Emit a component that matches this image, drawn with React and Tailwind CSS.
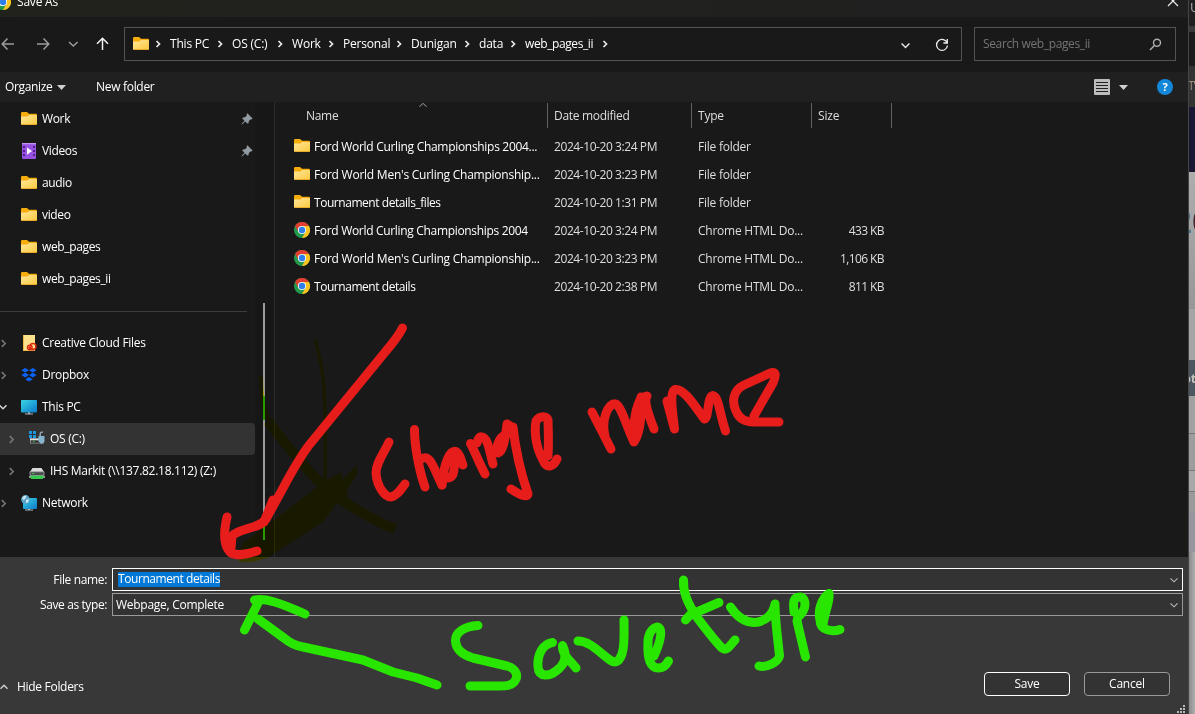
import React from "react";

function Folder() {
  return (
    <svg width="16" height="14" viewBox="0 0 16 14" className="shrink-0">
      <defs>
        <linearGradient id="fold" x1="0" y1="0" x2="1" y2="1">
          <stop offset="0" stopColor="#ffe69c" />
          <stop offset="1" stopColor="#fcc93c" />
        </linearGradient>
      </defs>
      <path d="M0 1.2Q0 0 1.2 0H6L8 1.8H15Q16 1.8 16 3V8H0Z" fill="#f5ac0c" />
      <path d="M0 4.5H6.5L8 3H15.4Q16 3 16 3.6V12Q16 13 15 13H1Q0 13 0 12Z" fill="url(#fold)" />
      <path d="M.2 12.2H15.8Q15.6 13 15 13H1Q.4 13 .2 12.2Z" fill="#e2a01d" />
    </svg>
  );
}

function Chrome() {
  return (
    <svg width="16" height="16" viewBox="0 0 16 16" className="shrink-0">
      <circle cx="8" cy="8" r="8" fill="#24984b" />
      <path d="M1.07 4A8 8 0 0 1 14.93 4H8A4 4 0 0 0 4.54 10Z" fill="#e33b2e" />
      <path d="M14.93 4A8 8 0 0 1 8 16L11.46 10A4 4 0 0 0 8 4Z" fill="#fcc31e" />
      <circle cx="8" cy="8" r="4.1" fill="#fff" />
      <circle cx="8" cy="8" r="3.2" fill="#2f7de9" />
    </svg>
  );
}

function Chev({ d = "right", c = "#e8e8e8", s = 8, w = 1.5 }) {
  const paths = { right: "M2.5 1L5.5 4L2.5 7", down: "M.5 2.3L4 5.8L7.5 2.3", up: "M.5 5.8L4 2.3L7.5 5.8" };
  return (
    <svg width={s} height={s} viewBox="0 0 8 8" className="shrink-0 overflow-visible" fill="none" stroke={c} strokeWidth={w}>
      <path d={paths[d]} />
    </svg>
  );
}

function Pin() {
  return (
    <svg width="12" height="12" viewBox="0 0 12 12" className="shrink-0" fill="#929ba1">
      <path d="M6.3.3L11.6 5.5L10.6 6.4L9.7 6.2L7.7 8.2L7.6 10.1L6.8 10.8L4.2 8.4L1 11.5L.4 11L3.5 7.7L1.2 5.2L2 4.4L4 4.3L6 2.2L5.6 1Z" />
    </svg>
  );
}

function Video() {
  return (
    <svg width="16" height="16" viewBox="0 0 16 16" className="shrink-0">
      <rect x="1" width="14" height="16" rx="1" fill="#9752e4" />
      <rect x="1" width="14" height="1.2" fill="#c294f5" />
      <path d="M2 3h2v2H2zM2 7h2v2H2zM2 11h2v2H2zM12 3h2v2h-2zM12 7h2v2h-2zM12 11h2v2h-2z" fill="#4d2384" />
      <path d="M6 4.5V11.7L11 8Z" fill="#fff" />
    </svg>
  );
}

function CreativeCloud() {
  return (
    <svg width="16" height="16" viewBox="0 0 16 16" className="shrink-0">
      <path d="M2 0H14V16H2Z" fill="#ffe18a" />
      <path d="M2 0H3V16H2ZM2 15H14V16H2Z" fill="#efbd43" />
      <g fill="none" stroke="#dc2712" strokeWidth="1.4">
        <circle cx="8.8" cy="12.4" r="2.3" />
        <circle cx="12" cy="11.5" r="3" />
        <path d="M7.5 12L10 14.5H13" />
      </g>
    </svg>
  );
}

function Dropbox() {
  return (
    <svg width="16" height="16" viewBox="0 0 16 16" className="shrink-0" fill="#0b62f6">
      <path d="M4.2 1L8 3.3L4.2 5.6L.4 3.3ZM11.8 1L15.6 3.3L11.8 5.6L8 3.3ZM4.2 5.8L8 8.1L4.2 10.4L.4 8.1ZM11.8 5.8L15.6 8.1L11.8 10.4L8 8.1ZM8 10L11.8 12.2L8 14.5L4.2 12.2Z" />
    </svg>
  );
}

function Monitor({ globe }) {
  return (
    <svg width="16" height="16" viewBox="0 0 16 16" className="shrink-0">
      <defs>
        <linearGradient id="mon" x1="0" y1="0" x2="1" y2="1">
          <stop offset="0" stopColor="#3bd5e4" />
          <stop offset="1" stopColor="#0c78c9" />
        </linearGradient>
      </defs>
      <path d="M7 13h2v1.5h3v1H4v-1h3Z" fill="#aeb6bc" />
      <rect x={globe ? 2 : 0} y={globe ? 3 : 1} width={globe ? 14 : 16} height={globe ? 11 : 12.5} rx=".8" fill="url(#mon)" />
      {globe && (
        <g>
          <circle cx="4.5" cy="4.5" r="4.4" fill="#5ba4c9" />
          <path d="M1 3Q3 0 5.5.8L4.5 3.5L2.5 5ZM5 5L8 4L7 7.5L5 8Z" fill="#cfe7f0" />
        </g>
      )}
    </svg>
  );
}

function OsDrive() {
  return (
    <svg width="16" height="16" viewBox="0 0 16 16" className="shrink-0">
      <path d="M1 7.5H15V12.5H1Z" fill="#8b9092" />
      <path d="M1 7.5H15V9H1Z" fill="#dcdddd" />
      <path d="M2 9.6H11V11.7H2Z" fill="#292b2c" />
      <path d="M4 10.2h1.5v1H4z" fill="#4be04c" />
      <path d="M0 0h3v3H0zM4 0h3v3H4zM0 4h3v3H0zM4 4h3v3H4z" fill="#1b95e0" />
      <path d="M11.2 6V2.8Q11.5.7 14 1.2" fill="none" stroke="#9aabb5" strokeWidth="1.4" />
      <path d="M9.5 5H15.5V10.2L12.5 13.2L9.5 10.2Z" fill="#86b5d1" />
    </svg>
  );
}

function NetDrive() {
  return (
    <svg width="16" height="16" viewBox="0 0 16 16" className="shrink-0">
      <path d="M3.5 5H12.5L15 9H1Z" fill="#dadada" />
      <path d="M1 8.7H15V12.5H1Z" fill="#4b4e50" stroke="#a8abad" strokeWidth=".8" />
      <path d="M3.5 10h1.5v1H3.5z" fill="#4be04c" />
      <path d="M0 13.3H16V14.7H0Z" fill="#a9e4b3" />
      <path d="M2 12.6H14V16H2Z" fill="#35c94e" />
    </svg>
  );
}

const places = [
  { icon: <Folder />, name: "Work", pin: true },
  { icon: <Video />, name: "Videos", pin: true },
  { icon: <Folder />, name: "audio" },
  { icon: <Folder />, name: "video" },
  { icon: <Folder />, name: "web_pages" },
  { icon: <Folder />, name: "web_pages_ii" },
];

const tree = [
  { icon: <CreativeCloud />, name: "Creative Cloud Files" },
  { icon: <Dropbox />, name: "Dropbox" },
  { icon: <Monitor />, name: "This PC", open: true },
  { icon: <OsDrive />, name: "OS (C:)", child: true, active: true },
  { icon: <NetDrive />, name: "IHS Markit (\\\\137.82.18.112) (Z:)", child: true },
  { icon: <Monitor globe />, name: "Network" },
];

const crumbs = [
  ["This PC", "w-[62px]"],
  ["OS (C:)", "w-[60px]"],
  ["Work", "w-[51px]"],
  ["Personal", "w-[68px]"],
  ["Dunigan", "w-[68px]"],
  ["data", "w-[46px]"],
  ["web_pages_ii", "w-[92px] tracking-[-0.4px]"],
];

const files = [
  ["Ford World Curling Championships 2004...", "2024-10-20 3:24 PM", "File folder", "", "tracking-[-0.3px]"],
  ["Ford World Men's Curling Championship...", "2024-10-20 3:23 PM", "File folder", "", "tracking-[-0.24px]"],
  ["Tournament details_files", "2024-10-20 1:31 PM", "File folder", "", "tracking-[-0.45px]"],
  ["Ford World Curling Championships 2004", "2024-10-20 3:24 PM", "Chrome HTML Do...", "433 KB", "tracking-[-0.32px]"],
  ["Ford World Men's Curling Championship...", "2024-10-20 3:23 PM", "Chrome HTML Do...", "1,106 KB", "tracking-[-0.24px]"],
  ["Tournament details", "2024-10-20 2:38 PM", "Chrome HTML Do...", "811 KB", "tracking-[-0.45px]"],
];

function Triangle() {
  return (
    <svg width="9" height="5" viewBox="0 0 9 5" className="shrink-0" fill="#d0d0d0">
      <path d="M0 0H9L4.5 5Z" />
    </svg>
  );
}

function NavBar() {
  return (
    <div className="flex h-[55px] items-center bg-[#191919] pb-px">
      <div className="flex w-[124px] items-center">
        <svg width="124" height="20" viewBox="0 0 124 20" fill="none" strokeWidth="1.5" stroke="#9c9c9c">
          <path d="M14 10H2.5M7.5 4.5L2.2 10L7.5 15.5M37 10H48.5M43.5 4.5L48.8 10L43.5 15.5" />
          <path d="M69 8L73.3 12L77.6 8" />
          <path d="M102.5 16V4.5M97 9.7L102.5 4.2L108 9.7" stroke="#f4f4f4" />
        </svg>
      </div>
      <div className="flex h-[34px] w-[838px] items-center border border-[#535353] pl-2">
        <span className="-mt-px"><Folder /></span>
        <span className="flex w-[21px] justify-center pr-1"><Chev w={1.7} /></span>
        {crumbs.map(([name, w]) => (
          <span key={name} className={`flex shrink-0 items-center justify-between ${w}`}>
            {name}
            <span className="mr-2"><Chev w={1.7} /></span>
          </span>
        ))}
        <span className="ml-auto mr-[25px] mt-0.5"><Chev d="down" s={9} w={1.3} /></span>
        <svg width="14" height="14" viewBox="0 0 14 14" className="mr-3 mt-0.5" fill="none" stroke="#eee" strokeWidth="1.3">
          <path d="M12.2 5A5.5 5.5 0 1 0 12.5 7.5M12.3 1V5H8.4" />
        </svg>
      </div>
      <div className="ml-3 flex h-[34px] w-[202px] items-center justify-between border border-[#535353] pl-2 pr-[13px] tracking-[-0.37px] text-[#757575]">
        Search web_pages_ii
        <svg width="13" height="13" viewBox="0 0 13 13" fill="none" stroke="#b0b0b0" strokeWidth="1.4">
          <circle cx="8" cy="4.8" r="3.5" />
          <path d="M5.6 7.3L1 12" />
        </svg>
      </div>
    </div>
  );
}

function Toolbar() {
  return (
    <div className="flex h-[30px] items-center bg-[#202020] pl-[5px] pr-[15px]">
      <span className="w-[52px] tracking-[-0.35px]">Organize</span>
      <Triangle />
      <span className="ml-[30px] tracking-[-0.3px]">New folder</span>
      <svg width="16" height="16" viewBox="0 0 16 16" className="ml-auto">
        <rect width="16" height="16" rx="1" fill="#bcbcbc" />
        <path d="M2 3.5H14M2 6.5H14M2 9.5H14M2 12.5H14" stroke="#202020" />
      </svg>
      <span className="ml-[9px]"><Triangle /></span>
      <span className="ml-[29px] flex size-4 items-center justify-center rounded-full bg-[#1587d8] text-[11px] font-bold">?</span>
    </div>
  );
}

function Sidebar() {
  return (
    <div className="flex w-[275px] shrink-0 border-r border-[#2b2b2b]">
      <div className="w-[255px] pt-px">
        {places.map((p) => (
          <div key={p.name} className="flex h-8 items-center gap-[5px] pl-[21px] pr-0.5 tracking-[-0.35px]">
            {p.icon}
            <span>{p.name}</span>
            {p.pin && <span className="ml-auto"><Pin /></span>}
          </div>
        ))}
        <div className="flex h-8 items-center pr-2"><div className="h-px w-full bg-[#3d3d3d]" /></div>
        {tree.map((t) => (
          <div key={t.name} className={`flex h-8 items-center gap-[5px] rounded-r-sm tracking-[-0.28px] ${t.child ? "pl-2" : "pl-0"} ${t.active ? "bg-[#333333]" : ""}`}>
            <span className="-ml-px mr-px flex w-4 shrink-0 items-center">
              <Chev d={t.open ? "down" : "right"} c={t.open ? "#d8d8d8" : "#777"} s={t.open ? 8 : 9} w={1.4} />
            </span>
            {t.icon}
            <span>{t.name}</span>
          </div>
        ))}
      </div>
      <div className="flex w-[19px] bg-[#171717] pl-2 pt-[201px]">
        <div className="h-[237px] w-0.5 bg-[#9b9b9b]" />
      </div>
    </div>
  );
}

function FileList() {
  return (
    <div className="grow pt-px">
      <div className="flex h-[25px] items-center text-[#dedede]">
        <div className="flex h-full w-[273px] items-center border-r border-[#636363] pl-[31px]">
          <span className="w-[33px] tracking-[-0.3px]">Name</span>
          <span className="mb-[21px] ml-20"><Chev d="up" c="#aaa" w={1} /></span>
        </div>
        <div className="flex h-full w-36 items-center border-r border-[#636363] pl-1.5 tracking-[-0.3px]">Date modified</div>
        <div className="flex h-full w-[120px] items-center border-r border-[#636363] pl-1.5">Type</div>
        <div className="flex h-full w-20 items-center border-r border-[#636363] pl-1.5">Size</div>
      </div>
      <div className="pt-[5px]">
        {files.map(([name, date, type, size, track], i) => (
          <div key={i} className="flex h-7 items-center pl-[19px] text-[#dedede]">
            <span className="mb-0.5 mr-1">{i < 3 ? <Folder /> : <Chrome />}</span>
            <span className={`w-60 text-white ${track}`}>{name}</span>
            <span className="w-36 tracking-[-0.42px]">{date}</span>
            <span className="w-[113px] tracking-[-0.24px]">{type}</span>
            <span className="w-[73px] text-right tracking-[-0.6px]">{size}</span>
          </div>
        ))}
      </div>
    </div>
  );
}

function Footer() {
  return (
    <div className="h-[157px] bg-[#383838] pt-[11px]">
      <div className="flex h-[23px] items-center">
        <span className="w-[112px] pr-[5px] text-right tracking-[-0.35px]">File name:</span>
        <div className="flex h-full w-[1071px] items-center justify-between border border-white bg-[#333] pl-[5px] pr-1">
          <span className="h-[15px] bg-[#0078d7] leading-[14px] tracking-[-0.42px]">Tournament details</span>
          <Chev d="down" c="#bbb" w={1.1} />
        </div>
      </div>
      <div className="mt-0.5 flex h-[23px] items-center">
        <span className="w-[112px] pr-[5px] text-right tracking-[-0.4px]">Save as type:</span>
        <div className="flex h-full w-[1071px] items-center justify-between border border-[#9a9a9a] bg-[#333] pl-[3px] pr-1">
          <span className="tracking-[-0.27px]">Webpage, Complete</span>
          <Chev d="down" c="#bbb" w={1.1} />
        </div>
      </div>
      <div className="mt-14 flex h-6 items-center pr-[18px]">
        <span className="mt-1.5 flex items-center gap-[9px] tracking-[-0.3px]"><Chev d="up" c="#ccc" /> Hide Folders</span>
        <button className="ml-auto h-6 w-[86px] rounded border border-white bg-[#333] text-center">Save</button>
        <button className="ml-3.5 h-6 w-[86px] rounded border border-[#9a9a9a] bg-[#333] text-center">Cancel</button>
      </div>
      <div className="flex justify-end pr-0.5 pt-2">
        <svg width="9" height="9" viewBox="0 0 9 9" fill="#b8b8b8">
          <path d="M0 7h2v2H0zM3 7h2v2H3zM6 7h2v2H6zM3 4h2v2H3zM6 4h2v2H6zM6 1h2v2H6z" />
        </svg>
      </div>
    </div>
  );
}

function PageBehind() {
  return (
    <div className="flex w-[7px] flex-col overflow-hidden border-l border-[#454545] whitespace-nowrap">
      <div className="h-[26px] shrink-0 bg-[#202020] pl-px text-[13px] leading-[14px] text-[#aaa]">U</div>
      <div className="h-[6px] shrink-0 bg-[#3a3a3a]" />
      <div className="h-[34px] shrink-0 bg-[#1b1b1b]" />
      <div className="h-[41px] shrink-0 bg-[#333] text-[12px] leading-[40px] text-[#9b8c7c]"><span className="-ml-px tracking-[-1px]">TV</span></div>
      <div className="h-[65px] shrink-0 bg-[#181833]" />
      <div className="flex h-[137px] shrink-0 items-start bg-linear-to-b from-[#adadad] to-[#979797] pt-7">
        <span className="-ml-[15px] text-[32px] font-semibold leading-[42px] text-[#4a7890]">2</span>
        <span className="text-[32px] font-semibold leading-[42px] text-[#40282c]">0</span>
      </div>
      <div className="h-[51px] shrink-0 bg-[#a5a5a5]" />
      <div className="h-9 shrink-0 bg-[#4b5661] text-[13px] font-bold leading-9 text-[#c0c0b8]"><span className="-ml-[6px]">ot</span></div>
      <div className="h-[38px] shrink-0 border-b border-[#777] bg-[#a1a1a1]" />
      <div className="h-[37px] shrink-0 border-b border-[#777] bg-[#9d9d9d]" />
      <div className="h-[21px] shrink-0 border-b border-[#777] bg-[#a8a8a8]" />
      <div className="h-5 shrink-0 bg-[#9a9a9a]" />
      <div className="h-10 shrink-0 bg-[#96969e]" />
      <div className="grow bg-linear-to-r from-[#8a8a8a] to-[#b0b0b0]" />
    </div>
  );
}

function Ink() {
  return (
    <>
      <svg width="1195" height="714" viewBox="0 0 1195 714" className="pointer-events-none absolute left-0 top-0 mix-blend-multiply" fill="none" stroke="#ffff00" strokeLinejoin="round">
        <path strokeWidth="3.5" d="M315 340C325 370 326 400 325 480" />
        <path strokeWidth="4" d="M261 376C261 410 268 420 277 432" />
        <path strokeWidth="10" d="M268 421C290 450 310 475 330 492C350 506 372 520 395 529" />
        <path fill="#ffff00" stroke="none" d="M317 487L333 476L342 473V480L357 465V474L347 490V502L337 503L323 522L267 558L252 562H239L238 555L243 543L270 523Z" />
      </svg>
      <svg width="1195" height="714" viewBox="0 0 1195 714" className="pointer-events-none absolute left-0 top-0" fill="none" strokeLinecap="round" strokeLinejoin="round">
        <path d="M264 396V420M264 525V540" stroke="#279b00" strokeWidth="2" strokeLinecap="butt" />
        <g stroke="#e71d1c" strokeWidth="9">
          <path d="M402.5 328C398 337 392 344 386 351L310 444C302 454 290 475 282 490L266 519C258 530 240 527 232 536L231 548M273 500L264 522" />
          <path d="M227 517C224 530 223 545 230 552C236 557 247 554 257 551" />
          <path d="M389 442C384 453 376 463 376 473C377 487 385 497 391 497C397 496 401 489 405 484" />
          <path d="M414.5 429.5C414.5 446 419 470 425 487M420 460C430 452 433 467 442 485" />
          <path d="M442 485C444 462 450 450 456 451.5C460 453 461 461 463 465M456 453C453 470 456 477 447 478" />
          <path d="M470.5 443.5C475 452 480 465 485 474M477 443C479 434 484 436 487 442C490 450 491 457 493 464" />
          <path d="M507 424C505 440 503 452 498 453C496 449 497 438 507 434M513 427C515 445 518 465 528 494C527 498 520 495 511 489M507 424L513 428" />
          <path d="M548 456C549 440 548 425 548 420C547 416 540 415 536 421C534 432 536 448 543 460C547 470 554 466 557 459" />
          <path d="M592 412L611 449M605 436C601 420 608 402 616 404C622 408 626 425 634 442C642 430 641 410 641 397M633 438C633 420 637 405 641 398L647 396C643 402 650 418 654 429" />
          <path d="M667 401L674.5 429C673 415 669 391 675 389.5C685 388 697 410 704.5 419C709 418 707 396 713 395.5C719 397 719 412 725.5 431" />
          <path d="M754 416L773 383C777 374 776 370 768 374L744 385C734 390 731 400 736 411C739 419 746 422 754 422L779 422" />
        </g>
        <g stroke="#28e600" strokeWidth="9">
          <path d="M258 619L284 638C290 643 296 646 303 647L363 660L393 672L417 678L437 685" />
          <path d="M244.5 630L259 601M254.5 600C265 598 278 602 305 614" />
          <path d="M478 625.5C464 626 455 633 455.5 641C456 650 463 655 473 658L507 666C518 669 517 677 516 679C513 687 503 686 495 686L470 686" />
          <path d="M552.5 642.5C542 644 537 656 538 667C539 678 550 676 556 671C566 664 567 655 562.5 645.5C562 655 570 660 576 668" />
          <path d="M578 641C590 641 600 653 610 660C617 665 620 659 622 654C625 645 624 630 624 620" />
          <path d="M654 656C659 645 662 634 660 629C656 623 648 632 648 642C647 660 651 668 658 668C664 668 666 665 668.5 661" />
          <path d="M683.5 580C683 592 687 602 696 616C705 628 715 641 722 648C727 652 731 644 735 640M685.5 620L690 615L719 602.5" />
          <path d="M730.5 607C737 617 744 622 754 622.5C765 622 773 615 775 604C775 620 778 640 779.5 656C778 662 767 668 759 666" />
          <path d="M794 612C793 602 793 597 800 597C807 598 807 610 798 617L797 621L805.5 657" />
          <path d="M829 593.5C820 600 818 612 820 620C820 631 833 632 840 629.5M829 594C830 602 824 614 823 625" />
        </g>
      </svg>
    </>
  );
}

export default function App() {
  return (
    <div className="relative flex h-[714px] w-[1195px] overflow-hidden whitespace-nowrap bg-[#191919] font-['Open_Sans','Noto_Sans',sans-serif] text-[12px] leading-4 tracking-[-0.2px] text-white">
      <div className="flex w-[1188px] shrink-0 flex-col">
        <div className="flex h-[17px] items-start justify-between overflow-hidden bg-linear-to-r from-[#22221c] to-[#202020] to-80% pr-[9px]">
          <div className="-mt-[7px] ml-[-5px] flex items-center gap-1.5">
            <Chrome />
            <span className="mt-px">Save As</span>
          </div>
          <svg width="12" height="12" viewBox="0 0 12 12" className="-mt-[5px]" stroke="#eee" strokeWidth="1.2">
            <path d="M1 1L11 11M11 1L1 11" />
          </svg>
        </div>
        <NavBar />
        <Toolbar />
        <div className="flex h-[455px] bg-[#191919]">
          <Sidebar />
          <FileList />
        </div>
        <Footer />
      </div>
      <PageBehind />
      <Ink />
    </div>
  );
}
